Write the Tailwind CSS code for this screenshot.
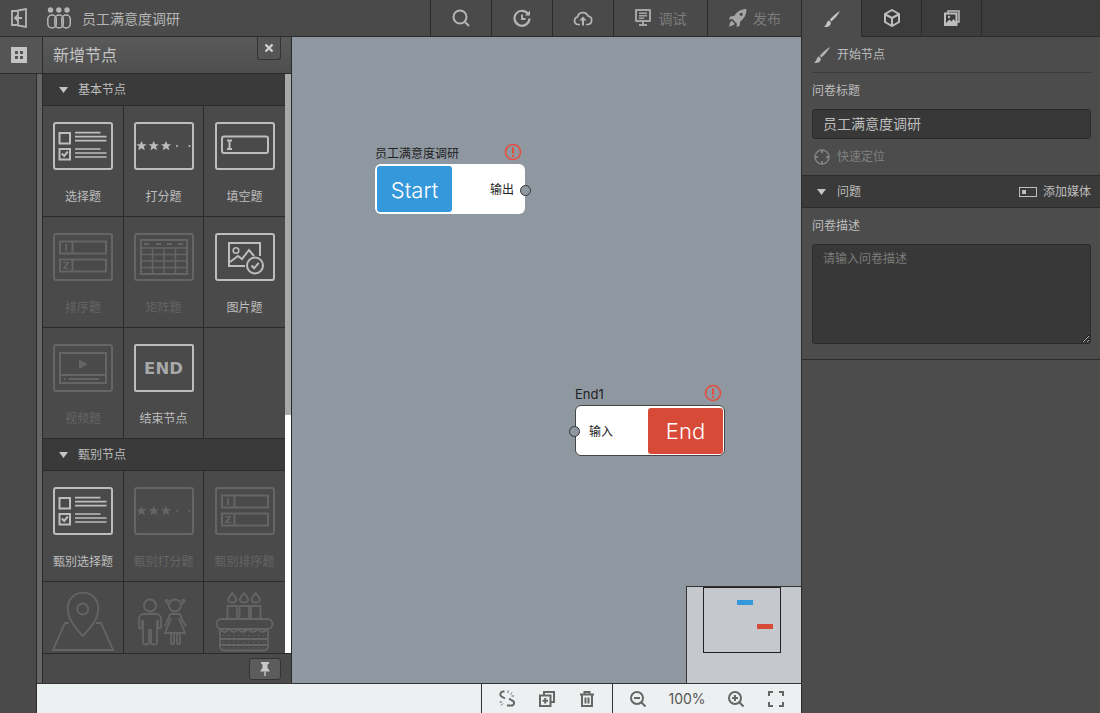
<!DOCTYPE html>
<html lang="zh-CN">
<head>
<meta charset="utf-8">
<title>员工满意度调研</title>
<script src="https://cdn.jsdelivr.net/npm/@tailwindcss/browser@4"></script>
</head>
<body class="bg-[#4a4a4a] font-['Inter','Noto_Sans_CJK_SC',sans-serif]">

<svg width="0" height="0" class="absolute">
    <symbol id="choice" viewBox="0 0 60 48">
        <g fill="none" stroke="currentColor">
            <rect x="1" y="1" width="58" height="46" rx="2" stroke-width="2"/>
            <rect x="6.500" y="11" width="10.500" height="10.500" stroke-width="2"/>
            <rect x="6.500" y="27" width="10.500" height="10.500" stroke-width="2"/>
            <path d="M22 10.700H47.500M22 14.700H53.500M22 18.700H53.500M22 27H47.500M22 31H53.500M22 35H53.500" stroke-width="1.700"/>
            <path d="M8.800 31.500l2.400 2.400 3.600-4.400" stroke-width="2"/>
        </g>
    </symbol>
    <symbol id="stars" viewBox="0 0 60 48">
        <rect x="1" y="1" width="58" height="46" rx="2" fill="none" stroke="currentColor" stroke-width="2"/>
        <g fill="currentColor">
            <path d="M7.500 19l1.500 3.300h3.600l-2.800 2.300 1 3.600-3.300-2-3.300 2 1-3.600-2.800-2.300h3.600z"/>
            <path d="M19.700 19l1.500 3.300h3.600l-2.800 2.300 1 3.600-3.300-2-3.300 2 1-3.600-2.800-2.300h3.600z"/>
            <path d="M32 19l1.500 3.300h3.600l-2.800 2.300 1 3.600-3.300-2-3.300 2 1-3.600-2.800-2.300h3.600z"/>
            <circle cx="43" cy="24" r="1"/>
            <circle cx="55.500" cy="24" r="1"/>
        </g>
    </symbol>
    <symbol id="fill" viewBox="0 0 60 48">
        <g fill="none" stroke="currentColor">
            <rect x="1" y="1" width="58" height="46" rx="2" stroke-width="2"/>
            <rect x="7" y="14.500" width="46" height="16.500" rx="2" stroke-width="2"/>
            <path d="M12 18.500h5M12 27h5M14.500 18.500V27" stroke-width="2"/>
        </g>
    </symbol>
    <symbol id="matrix" viewBox="0 0 60 48">
        <g fill="none" stroke="currentColor">
            <rect x="1" y="1" width="58" height="46" rx="2" stroke-width="2"/>
            <rect x="7" y="7" width="46" height="34" stroke-width="2"/>
            <path d="M7 15H53M7 21.500H53M7 28H53M7 34.500H53M18.500 15V41M30 15V41M41.500 15V41" stroke-width="1.500"/>
            <path d="M10 11h5M22 11h5M33 11h5M44 11h5" stroke-width="2"/>
        </g>
    </symbol>
    <symbol id="picture" viewBox="0 0 60 48">
        <g fill="none" stroke="currentColor">
            <rect x="1" y="1" width="58" height="46" rx="2" stroke-width="2"/>
            <path d="M30 33H14V10H45V23" stroke-width="2"/>
            <circle cx="21" cy="17.500" r="2.800" stroke-width="1.600"/>
            <path d="M15 29l8-6 4 3 7-9 5 6" stroke-width="2"/>
            <circle cx="40" cy="32.500" r="8" stroke-width="2"/>
            <path d="M36.500 32.500l2.600 2.800 4.600-5.400" stroke-width="2"/>
        </g>
    </symbol>
    <symbol id="video" viewBox="0 0 60 48">
        <g fill="none" stroke="currentColor">
            <rect x="1" y="1" width="58" height="46" rx="2" stroke-width="2"/>
            <rect x="7" y="9" width="46" height="30" stroke-width="2"/>
            <path d="M7 31H53" stroke-width="2"/>
            <path d="M16 35H46" stroke-width="2"/>
        </g>
        <path d="M26 15.500l8.500 4.700-8.500 4.700zM11 33.500l2 1.500-2 1.500z" fill="currentColor"/>
    </symbol>
</svg>

<div class="w-[1100px] h-[713px] flex flex-col overflow-hidden text-[#bdbdbd]">

    <!-- top bar -->
    <header class="h-[37px] flex shrink-0 bg-[#4a4a4a]">
        <div class="flex-1 flex items-center border-b border-[#2b2b2b]">
            <div class="w-[37px] flex justify-center">
                <svg width="16" height="20" viewBox="0 0 16 20" fill="none" stroke="#b5b5b5" stroke-width="1.800">
                    <path d="M7 3H1V17H7"/>
                    <path d="M7 2.500L15 1V19L7 17.500Z"/>
                    <path d="M4 10H11M6.500 7.500L4 10L6.500 12.500"/>
                </svg>
            </div>
            <svg class="ml-[10px]" width="24" height="22" viewBox="0 0 24 22" fill="none" stroke="#b5b5b5" stroke-width="1.500">
                <circle cx="3.500" cy="3" r="2.700" fill="#b5b5b5" stroke="none"/>
                <circle cx="11.800" cy="3" r="2.700" fill="#b5b5b5" stroke="none"/>
                <circle cx="20" cy="3" r="2.700" fill="#b5b5b5" stroke="none"/>
                <rect x=".8" y="8" width="8.500" height="13" rx="4.200"/>
                <rect x="7.800" y="8" width="8.500" height="13" rx="4.200"/>
                <rect x="14.800" y="8" width="8.500" height="13" rx="4.200"/>
            </svg>
            <span class="ml-[11px] text-[14px] text-[#b5b5b5]">员工满意度调研</span>
            <div class="flex-1"></div>
            <div class="w-[61px] h-full flex items-center justify-center border-l border-[#2b2b2b]">
                <svg width="18" height="18" viewBox="0 0 18 18" fill="none" stroke="#b5b5b5" stroke-width="2"><circle cx="8" cy="8" r="6.500"/><path d="M12.500 12.500L17 17"/></svg>
            </div>
            <div class="w-[61px] h-full flex items-center justify-center border-l border-[#2b2b2b]">
                <svg width="18" height="18" viewBox="0 0 18 18" fill="none" stroke="#b5b5b5" stroke-width="2.200"><path d="M15.500 5.500A7.500 7.500 0 1 0 16.500 9.500"/><path d="M9 5.500V10H12.500" stroke-width="1.800"/><path d="M17 1.500V6.500H12Z" fill="#b5b5b5" stroke="none"/></svg>
            </div>
            <div class="w-[61px] h-full flex items-center justify-center border-l border-[#2b2b2b]">
                <svg width="20" height="16" viewBox="0 0 20 16" fill="none" stroke="#b5b5b5" stroke-width="1.700"><path d="M7 14.500H5A3.800 3.800 0 0 1 4.500 7A5.500 5.500 0 0 1 15 6A4.300 4.300 0 0 1 15 14.500H13"/><path d="M10 15.500V9" stroke-width="2"/><path d="M10 6.500L6.500 10.500H13.500Z" fill="#b5b5b5" stroke="none"/></svg>
            </div>
            <div class="w-[94px] h-full flex items-center justify-center gap-[8px] border-l border-[#2b2b2b] text-[14px] text-[#7c7c7c]">
                <svg width="16" height="18" viewBox="0 0 16 18"><path fill-rule="evenodd" d="M1 0H15A1 1 0 0 1 16 1V12A1 1 0 0 1 15 13H1A1 1 0 0 1 0 12V1A1 1 0 0 1 1 0ZM2 2V11H14V2ZM4 3.500H12V5H4ZM4 6H12V7.500H4ZM4 8.500H9V10H4ZM7 13H9V15H12V17H4V15H7Z" fill="#a5a5a5"/></svg>
                调试
            </div>
            <div class="w-[94px] h-full flex items-center justify-center gap-[6px] border-l border-[#2b2b2b] text-[14px] text-[#7c7c7c]">
                <svg width="19" height="18" viewBox="0 0 17 17"><path fill-rule="evenodd" d="M17 0C17 5 15 9 11 12L10.500 16L7.500 17L8 14L3.500 9.500L.5 10L1.500 7L5.500 6.500C8 2.500 12 0 17 0ZM12 3.500A1.500 1.500 0 1 0 12 6.500A1.500 1.500 0 1 0 12 3.500ZM3 11C1.500 12 1 14 .5 16.500C3 16 5 15.500 6 14Z" fill="#a5a5a5"/></svg>
                发布
            </div>
        </div>
        <div class="w-[299px] flex bg-[#3c3c3c] border-l border-[#2b2b2b]">
            <div class="w-[60px] h-full flex items-center justify-center bg-[#4c4c4c] border-r border-[#2b2b2b]">
                <svg width="16" height="16" viewBox="0 0 16 16" fill="#c4c4c4"><path d="M16 0C12.500 2 8 6 5.800 8.800L7.400 10.400C10 8.500 14 4 16 0Z"/><path d="M5 9.500C2.500 10 3.200 13.500 0 16C3.500 16.300 7.500 15 6.700 11.300Z"/></svg>
            </div>
            <div class="w-[60px] h-[37px] flex items-center justify-center border-r border-b border-[#2b2b2b]">
                <svg width="16" height="18" viewBox="0 0 16 18" fill="none" stroke="#bdbdbd" stroke-width="2"><path d="M8 1L15 5V13L8 17L1 13V5Z"/><path d="M1.500 5.500L8 9L14.500 5.500M8 9V16.500"/></svg>
            </div>
            <div class="w-[60px] h-[37px] flex items-center justify-center border-r border-b border-[#2b2b2b]">
                <svg width="16" height="16" viewBox="0 0 16 16" fill="none" stroke="#bdbdbd" stroke-width="1.500"><path d="M4 3V1H15V12H12.500"/><path d="M2.500 3.500H12.500V15H1V3.500Z" stroke-width="2"/><path d="M2 13L5.500 9.500L7.500 11.500L9.500 9L12 12V14H2Z" fill="#bdbdbd" stroke="none"/><circle cx="5" cy="7" r="1.200" fill="#bdbdbd" stroke="none"/></svg>
            </div>
            <div class="flex-1 h-[37px] border-b border-[#2b2b2b]"></div>
        </div>
    </header>

    <div class="flex-1 flex min-h-0">

        <!-- left rail -->
        <div class="w-[37px] flex flex-col">
            <div class="h-[37px] shrink-0 flex items-center justify-center bg-[#555555] border-b border-[#2b2b2b]">
                <svg width="16" height="16" viewBox="0 0 16 16"><path fill-rule="evenodd" d="M0 0H16V16H0ZM4 4V7H7V4ZM9 4V7H12V4ZM4 9V12H7V9ZM9 9V12H12V9Z" fill="#c4c4c4"/></svg>
            </div>
            <div class="flex-1 border-r border-[#2b2b2b]"></div>
        </div>

        <div class="flex-1 flex flex-col min-w-0">
            <div class="flex-1 flex min-h-0">

                <!-- strip beside the rail -->
                <div class="w-[5px] flex flex-col bg-[#666666]">
                    <div class="h-[37px] bg-[#555555] border-b border-[#2b2b2b]"></div>
                </div>

                <!-- node panel -->
                <div class="w-[250px] flex flex-col bg-[#4a4a4a] border-l border-r border-[#2b2b2b]">
                    <div class="h-[37px] shrink-0 flex justify-between pl-[10px] pr-[10px] bg-linear-to-b from-[#5a5a5a] to-[#4e4e4e] border-b border-[#2b2b2b]">
                        <span class="text-[16px] leading-[36px] text-[#c4c4c4]">新增节点</span>
                        <button class="w-[24px] h-[23px] flex items-center justify-center bg-[#555555] border border-t-0 border-[#333333] rounded-b-[3px]">
                            <svg width="10" height="10" viewBox="0 0 10 10" stroke="#d0d0d0" stroke-width="2.400"><path d="M1.500 1.500L8.500 8.500M8.500 1.500L1.500 8.500"/></svg>
                        </button>
                    </div>

                    <div class="flex-1 flex min-h-0">
                        <div class="w-[242px] overflow-hidden">
                            <div class="h-[32px] flex items-center pl-[16px] gap-[10px] bg-[#3a3a3a] border-b border-[#2b2b2b] text-[12px]">
                                <svg width="9" height="6" viewBox="0 0 9 6"><path d="M0 0H9L4.500 6Z" fill="#c4c4c4"/></svg>
                                基本节点
                            </div>
                            <div class="grid grid-cols-[81px_80px_81px] auto-rows-[111px]">
                                <div class="flex flex-col items-center border-r border-b border-[#2b2b2b] pt-[16px] text-[#bdbdbd] text-[12px]"><svg width="60" height="48"><use href="#choice"/></svg><span class="mt-[18px]">选择题</span></div>
                                <div class="flex flex-col items-center border-r border-b border-[#2b2b2b] pt-[16px] text-[#bdbdbd] text-[12px]"><svg width="60" height="48"><use href="#stars"/></svg><span class="mt-[18px]">打分题</span></div>
                                <div class="flex flex-col items-center border-b border-[#2b2b2b] pt-[16px] text-[#bdbdbd] text-[12px]"><svg width="60" height="48"><use href="#fill"/></svg><span class="mt-[18px]">填空题</span></div>
                                <div class="flex flex-col items-center border-r border-b border-[#2b2b2b] pt-[16px] text-[#656565] text-[12px]">
                                    <svg width="60" height="48" viewBox="0 0 60 48" fill="none" stroke="currentColor" stroke-width="2">
                                        <rect x="1" y="1" width="58" height="46" rx="2"/>
                                        <rect x="7" y="8.500" width="46" height="12"/>
                                        <rect x="7" y="26.500" width="46" height="12"/>
                                        <path d="M19.500 8.500v12M19.500 26.500v12"/>
                                        <text x="13" y="18" text-anchor="middle" fill="currentColor" stroke="none" font-family="DejaVu Sans" font-weight="700" font-size="9.500">I</text>
                                        <text x="13" y="36" text-anchor="middle" fill="currentColor" stroke="none" font-family="DejaVu Sans" font-weight="700" font-size="9.500">Z</text>
                                    </svg>
                                    <span class="mt-[18px]">排序题</span>
                                </div>
                                <div class="flex flex-col items-center border-r border-b border-[#2b2b2b] pt-[16px] text-[#656565] text-[12px]"><svg width="60" height="48"><use href="#matrix"/></svg><span class="mt-[18px]">矩阵题</span></div>
                                <div class="flex flex-col items-center border-b border-[#2b2b2b] pt-[16px] text-[#bdbdbd] text-[12px]"><svg width="60" height="48"><use href="#picture"/></svg><span class="mt-[18px]">图片题</span></div>
                                <div class="flex flex-col items-center border-r border-b border-[#2b2b2b] pt-[16px] text-[#656565] text-[12px]"><svg width="60" height="48"><use href="#video"/></svg><span class="mt-[18px]">视频题</span></div>
                                <div class="flex flex-col items-center border-r border-b border-[#2b2b2b] pt-[16px] text-[#bdbdbd] text-[12px]">
                                    <div class="w-[60px] h-[48px] pt-[2px] flex items-center justify-center border-2 border-[#bdbdbd] rounded-[2px] font-['DejaVu_Sans',sans-serif] font-bold text-[16.500px] text-[#a8a8a8]">END</div>
                                    <span class="mt-[18px]">结束节点</span>
                                </div>
                                <div class="border-b border-[#2b2b2b]"></div>
                            </div>
                            <div class="h-[32px] flex items-center pl-[16px] gap-[10px] bg-[#3a3a3a] border-b border-[#2b2b2b] text-[12px]">
                                <svg width="9" height="6" viewBox="0 0 9 6"><path d="M0 0H9L4.500 6Z" fill="#c4c4c4"/></svg>
                                甄别节点
                            </div>
                            <div class="grid grid-cols-[81px_80px_81px] auto-rows-[111px]">
                                <div class="flex flex-col items-center border-r border-b border-[#2b2b2b] pt-[16px] text-[#bdbdbd] text-[12px]"><svg width="60" height="48"><use href="#choice"/></svg><span class="mt-[18px]">甄别选择题</span></div>
                                <div class="flex flex-col items-center border-r border-b border-[#2b2b2b] pt-[16px] text-[#656565] text-[12px]"><svg width="60" height="48"><use href="#stars"/></svg><span class="mt-[18px]">甄别打分题</span></div>
                                <div class="flex flex-col items-center border-b border-[#2b2b2b] pt-[16px] text-[#656565] text-[12px]">
                                    <svg width="60" height="48" viewBox="0 0 60 48" fill="none" stroke="currentColor" stroke-width="2">
                                        <rect x="1" y="1" width="58" height="46" rx="2"/>
                                        <rect x="7" y="8.500" width="46" height="12"/>
                                        <rect x="7" y="26.500" width="46" height="12"/>
                                        <path d="M19.500 8.500v12M19.500 26.500v12"/>
                                        <text x="13" y="18" text-anchor="middle" fill="currentColor" stroke="none" font-family="DejaVu Sans" font-weight="700" font-size="9.500">I</text>
                                        <text x="13" y="36" text-anchor="middle" fill="currentColor" stroke="none" font-family="DejaVu Sans" font-weight="700" font-size="9.500">Z</text>
                                    </svg>
                                    <span class="mt-[18px]">甄别排序题</span>
                                </div>
                                <div class="border-r border-[#2b2b2b]">
                                    <svg width="80" height="72" viewBox="0 0 80 72" fill="none" stroke="#656565" stroke-width="1.800">
                                        <path d="M39.700 54C33 46 24.700 38 24.700 26A15 15 0 0 1 55.300 26C55.300 38 47 46 39.700 54Z"/>
                                        <circle cx="39.700" cy="27" r="5.500"/>
                                        <path d="M26 41H22L10 68H70L58 41H53"/>
                                    </svg>
                                </div>
                                <div class="border-r border-[#2b2b2b]">
                                    <svg width="79" height="72" viewBox="0 0 79 72" fill="none" stroke="#656565" stroke-width="1.800">
                                        <circle cx="26" cy="23.500" r="6"/>
                                        <path d="M15 45V37A5 5 0 0 1 20 32H32A5 5 0 0 1 37 37V45C37 47 34 47 34 45V38M18 38V45C18 47 15 47 15 45"/>
                                        <path d="M19 38V61C19 63 25 63 25 61V47M27 47V61C27 63 33 63 33 61V38"/>
                                        <circle cx="51" cy="23.500" r="6"/>
                                        <path d="M44 22C40 18 42 17 45 19M58 22C62 18 61 17 57 19"/>
                                        <path d="M46 32H56L58 37C59 40 61 42 62 44M46 32L44 37L41 44M47 36L41 51H61L55 36"/>
                                        <path d="M47 51V60C47 63 50 63 50 60V51M53 51V60C53 63 56 63 56 60V51"/>
                                    </svg>
                                </div>
                                <div>
                                    <svg width="81" height="72" viewBox="0 0 81 72" fill="none" stroke="#656565" stroke-width="1.800">
                                        <path d="M28.300 11C25 15 23.500 17 24.500 19C25.500 21 31 21 32 19C33 17 31.500 15 28.300 11ZM40 11C36.700 15 35.200 17 36.200 19C37.200 21 42.800 21 43.800 19C44.800 17 43.300 15 40 11ZM51.700 11C48.400 15 46.900 17 47.900 19C48.900 21 54.500 21 55.500 19C56.500 17 55 15 51.700 11Z"/>
                                        <path d="M23.500 37V24H33V37M35.500 37V24H45V37M47 37V24H56.500V37"/>
                                        <rect x="12.500" y="37" width="56" height="10" rx="5"/>
                                        <path d="M16 47V64A4 4 0 0 0 20 68.500H60A4 4 0 0 0 64 64V47"/>
                                        <path d="M16 47C19 51 22 51 25 47C28 51 31 51 34 47C37 51 40 51 44 47C47 51 50 51 54 47C57 51 60 51 64 47"/>
                                        <path d="M16 57H64M16 63H64"/>
                                        <path d="M19 53.500H62M19 60H62M19 66H62" stroke-width="1.200" stroke-dasharray="1.500 3.500"/>
                                    </svg>
                                </div>
                            </div>
                        </div>
                        <!-- scrollbar -->
                        <div class="w-[6px] flex flex-col bg-white">
                            <div class="h-[341px] bg-[#a9a9a9]"></div>
                        </div>
                    </div>

                    <div class="h-[30px] shrink-0 flex items-center justify-end pr-[10px] bg-[#4a4a4a] border-t border-[#2b2b2b]">
                        <button class="w-[32px] h-[22px] flex items-center justify-center bg-[#5c5c5c] border border-[#333333] rounded-[3px]">
                            <svg width="10" height="14" viewBox="0 0 10 14" fill="#c8c8c8"><path d="M1 0H9V1.500L7.500 2.500V6L9.500 8.500V9.500H.5V8.500L2.500 6V2.500L1 1.500Z"/><path d="M4.300 9.500H5.700V14H4.300Z"/></svg>
                        </button>
                    </div>
                </div>

                <!-- canvas -->
                <div class="flex-1 relative bg-[#8f98a1] overflow-hidden">
                    <!-- start node -->
                    <div class="absolute left-[83px] top-[109px] text-[12px] leading-[16px] text-[#222222]">员工满意度调研</div>
                    <svg class="absolute left-[212px] top-[106px]" width="18" height="18" viewBox="0 0 18 18" fill="none" stroke="#e74c3c" stroke-width="1.600"><circle cx="9" cy="9" r="7.500"/><path d="M9 4.500V10.500" stroke-width="2"/><path d="M9 12V14" stroke-width="2"/></svg>
                    <div class="absolute left-[83px] top-[127px] w-[150px] h-[50px] flex items-center bg-white rounded-[6px] p-[2px]">
                        <div class="w-[75px] h-[46px] pt-[2px] flex items-center justify-center bg-[#3498db] rounded-[3px] text-white text-[22px] font-light">Start</div>
                        <span class="ml-auto mr-[9px] pt-[2px] text-[12px] text-[#222222]">输出</span>
                    </div>
                    <div class="absolute left-[228px] top-[148px] w-[11px] h-[11px] rounded-full bg-[#8f98a1] border border-[#333333]"></div>

                    <!-- end node -->
                    <div class="absolute left-[283px] top-[349px] text-[13px] leading-[16px] text-[#222222]">End1</div>
                    <svg class="absolute left-[412px] top-[347px]" width="18" height="18" viewBox="0 0 18 18" fill="none" stroke="#e74c3c" stroke-width="1.600"><circle cx="9" cy="9" r="7.500"/><path d="M9 4.500V10.500" stroke-width="2"/><path d="M9 12V14" stroke-width="2"/></svg>
                    <div class="absolute left-[283px] top-[368px] w-[150px] h-[51px] flex items-center bg-white border border-[#444444] rounded-[6px] p-[1px]">
                        <span class="ml-[12px] pt-[2px] text-[12px] text-[#222222]">输入</span>
                        <div class="ml-auto w-[75px] h-[46px] pt-[1px] flex items-center justify-center bg-[#d84a38] rounded-[3px] text-white text-[22px] font-light">End</div>
                    </div>
                    <div class="absolute left-[277px] top-[389px] w-[11px] h-[11px] rounded-full bg-[#8f98a1] border border-[#333333]"></div>

                    <!-- minimap -->
                    <div class="absolute right-0 bottom-0 w-[115px] h-[97px] bg-[#c5c9ce] border-l border-t border-[#333333]">
                        <div class="absolute left-[16px] top-0 w-[78px] h-[66px] border border-[#222222]"></div>
                        <div class="absolute left-[50px] top-[13px] w-[16px] h-[5px] bg-[#3498db]"></div>
                        <div class="absolute left-[70px] top-[37px] w-[16px] h-[5px] bg-[#d84a38]"></div>
                    </div>
                </div>
            </div>

            <!-- bottom toolbar -->
            <div class="h-[30px] shrink-0 flex items-center bg-[#ecf0f1] border-t border-[#333333] text-[#666666]">
                <div class="w-[444px]"></div>
                <div class="w-[132px] h-full flex items-center border-l border-r border-[#333333]">
                    <svg class="ml-[17px]" width="16" height="17" viewBox="0 0 16 17" fill="none" stroke="#666666" stroke-width="2"><path d="M5.500 1.500H4A2.800 2.800 0 0 0 2.500 6.500L6 8.500M10 8.500L13 10.500A2.500 2.500 0 0 1 12 15.500H8"/><path d="M9 .5V3M13 2.500L11.500 4.500M15 6H12.500M.5 12H3M2 15.500L4 13.500" stroke-width="1"/></svg>
                    <svg class="ml-[24px]" width="16" height="16" viewBox="0 0 16 16" fill="none" stroke="#666666" stroke-width="2"><path d="M5 4V1H15V11H12"/><rect x="1" y="4.500" width="10.500" height="10.500"/><path d="M6.200 7V12.500M3.500 9.700H9"/></svg>
                    <svg class="ml-[25px]" width="14" height="16" viewBox="0 0 14 16" fill="none" stroke="#666666" stroke-width="2"><path d="M0 3.500H14M4.500 3V1H9.500V3"/><path d="M2 4V15H12V4M5.500 6.500V12.500M8.500 6.500V12.500"/></svg>
                </div>
                <svg class="ml-[17px]" width="16" height="16" viewBox="0 0 16 16" fill="none" stroke="#666666" stroke-width="2"><circle cx="7" cy="7" r="6"/><path d="M11.500 11.500L15.500 15.500M4 7H10"/></svg>
                <span class="w-[82px] text-center text-[14px] text-[#555555]">100%</span>
                <svg width="16" height="16" viewBox="0 0 16 16" fill="none" stroke="#666666" stroke-width="2"><circle cx="7" cy="7" r="6"/><path d="M11.500 11.500L15.500 15.500M4 7H10M7 4V10"/></svg>
                <svg class="ml-[24px]" width="16" height="16" viewBox="0 0 16 16" fill="none" stroke="#666666" stroke-width="2"><path d="M1 5V1H5M11 1H15V5M15 11V15H11M5 15H1V11"/></svg>
            </div>
        </div>

        <!-- right panel -->
        <aside class="w-[299px] shrink-0 flex flex-col bg-[#4c4c4c] border-l border-[#2b2b2b]">
            <div class="ml-[10px] mr-[9px] h-[36px] flex items-center gap-[7px] border-b border-[#3a3a3a] text-[12px]">
                <svg class="ml-[2px]" width="16" height="16" viewBox="0 0 16 16" fill="#b5b5b5"><path d="M16 0C12.500 2 8 6 5.800 8.800L7.400 10.400C10 8.500 14 4 16 0Z"/><path d="M5 9.500C2.500 10 3.200 13.500 0 16C3.500 16.300 7.500 15 6.700 11.300Z"/></svg>
                开始节点
            </div>
            <div class="pl-[10px] pr-[9px]">
                <div class="mt-[9px] text-[12px] leading-[18px]">问卷标题</div>
                <input value="员工满意度调研" class="mt-[9px] w-full h-[30px] px-[10px] pb-[2px] bg-[#383838] border border-[#2b2b2b] rounded-[3px] text-[14px] text-[#bdbdbd] outline-none">
                <div class="mt-[9px] h-[18px] flex items-center gap-[7px] text-[12px] text-[#808080]">
                    <svg class="ml-[2px]" width="16" height="16" viewBox="0 0 16 16" fill="none" stroke="#808080" stroke-width="1.500"><circle cx="8" cy="8" r="7"/><path d="M8 .5V4M8 12V15.500M.5 8H4M12 8H15.500" stroke-width="2"/></svg>
                    快速定位
                </div>
            </div>
            <div class="mt-[9px] h-[33px] flex items-center justify-between pl-[15px] pr-[9px] bg-[#3a3a3a] border-t border-b border-[#2b2b2b] text-[12px]">
                <span class="flex items-center gap-[11px]">
                    <svg width="9" height="6" viewBox="0 0 9 6"><path d="M0 0H9L4.500 6Z" fill="#c4c4c4"/></svg>
                    问题
                </span>
                <span class="flex items-center gap-[6px]">
                    <svg width="18" height="10" viewBox="0 0 18 10" fill="none" stroke="#bdbdbd"><rect x=".5" y=".5" width="17" height="9"/><rect x="3.500" y="3.500" width="3" height="3" fill="#bdbdbd"/></svg>
                    添加媒体
                </span>
            </div>
            <div class="pl-[10px] pr-[9px] pb-[15px] border-b border-[#2b2b2b]">
                <div class="mt-[9px] text-[12px] leading-[18px]">问卷描述</div>
                <textarea readonly placeholder="请输入问卷描述" class="mt-[9px] block w-full h-[100px] px-[10px] py-[5px] bg-[#383838] border border-[#2b2b2b] rounded-[3px] text-[12px] placeholder:text-[#7c7c7c] outline-none"></textarea>
            </div>
        </aside>
    </div>
</div>
</body>
</html>
